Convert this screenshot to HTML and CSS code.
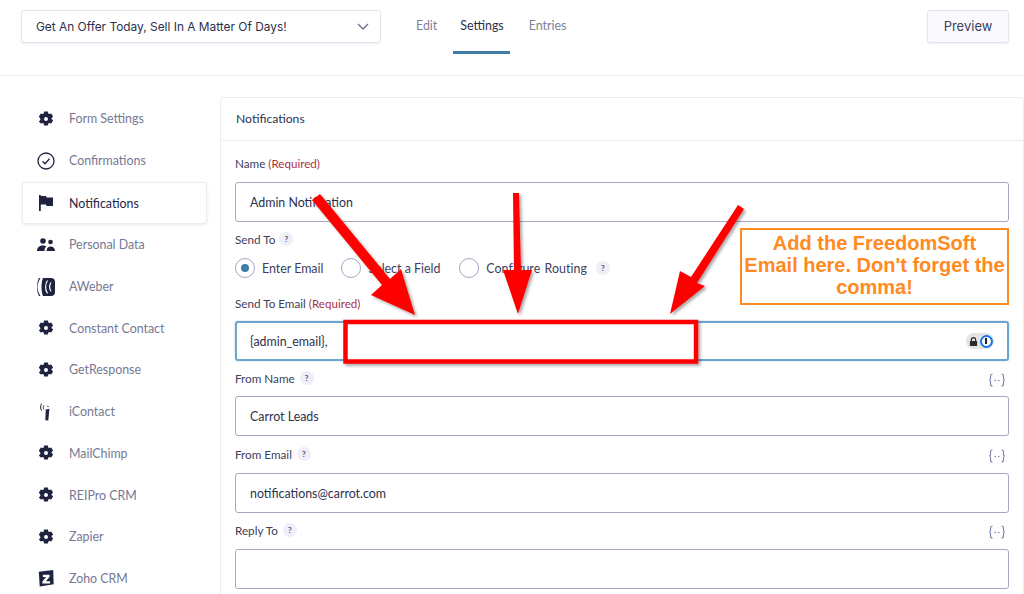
FILE: index.html
```html
<!DOCTYPE html>
<html lang="en">
<head>
<meta charset="utf-8">
<title>Notifications</title>
<link rel="stylesheet" href="styles.css">
</head>
<body>
<svg class="defs" width="0" height="0" aria-hidden="true">
  <symbol id="gear" viewBox="0 0 16 16"><path fill-rule="evenodd" d="M6.100.5h3.800l.4 2 1 .6 1.900-.7 1.900 3.200-1.500 1.300v1.200l1.500 1.300-1.900 3.200-1.900-.7-1 .6-.4 2H6.100l-.4-2-1-.6-1.900.7L.9 10.400l1.500-1.300V7.900L.9 5.600l1.900-3.200 1.900.7 1-.6zM8 6a2 2 0 1 0 0 4 2 2 0 0 0 0-4z"/></symbol>
  <symbol id="merge" viewBox="0 0 18 14"><path d="M4.500 1C2.800 1 2.500 1.800 2.500 3v2.500C2.500 6.500 2 7 1 7c1 0 1.500.5 1.500 1.500V11c0 1.200.3 2 2 2M13.500 1c1.700 0 2 .8 2 2v2.500c0 1 .5 1.500 1.500 1.500-1 0-1.500.5-1.500 1.500V11c0 1.200-.3 2-2 2" fill="none" stroke="currentColor" stroke-width="1.100"/><circle cx="7.300" cy="7.500" r=".8" fill="currentColor"/><circle cx="10.700" cy="7.500" r=".8" fill="currentColor"/></symbol>
</svg>

<header class="topbar">
  <div class="form-select"><span>Get An Offer Today, Sell In A Matter Of Days!</span>
    <svg class="chevron" viewBox="0 0 12 7"><path d="M1 1l5 5 5-5"/></svg>
  </div>
  <nav class="tabs">
    <a class="tab">Edit</a>
    <a class="tab tab-active">Settings</a>
    <a class="tab tab-last">Entries</a>
  </nav>
  <button class="preview">Preview</button>
</header>

<main class="layout">
  <aside class="sidebar">
    <a class="side-item"><span class="ico"><svg class="gear"><use href="#gear"/></svg></span>Form Settings</a>
    <a class="side-item"><span class="ico"><svg class="ico-lg" viewBox="0 0 18 18"><circle cx="9" cy="9" r="8" class="ln"/><path d="M5.500 9.300l2.500 2.400 4.500-5" class="ln"/></svg></span>Confirmations</a>
    <a class="side-item side-active"><span class="ico"><svg class="ico-lg" viewBox="0 0 18 18"><path d="M2 1h1.800v1H9l.6 1.500H16v8.500H9.500L9 10.500H3.800V17H2z"/></svg></span>Notifications</a>
    <a class="side-item"><span class="ico"><svg class="ico-people" viewBox="0 0 20 14"><circle cx="7" cy="3" r="2.800"/><circle cx="14.500" cy="4" r="2.300"/><path d="M1 13c0-3.500 2.500-5.500 6-5.500 1.500 0 2.500.3 3.300 1-1.200 1-1.800 2.500-1.800 4.500zM10.500 13c0-2.800 1.800-4.500 4.200-4.500S19 10.200 19 13z"/></svg></span>Personal Data</a>
    <a class="side-item"><span class="ico"><svg class="ico-lg" viewBox="0 0 18 18"><path d="M6 0h8c2.500 0 4 1.500 4 4v10c0 2.500-1.500 4-4 4H6C4 14 4 4 6 0z"/><path d="M3.500 0C1 4 .5 7 .5 9s.5 5 3 9H2C.5 15 0 12 0 9s.5-6 2-9z"/><path d="M10.500 2.500c-2.500 3.500-2.500 9.500 0 13M14 4.500c-1.500 2.500-1.500 6.500 0 9" class="ln-w"/></svg></span>AWeber</a>
    <a class="side-item"><span class="ico"><svg class="gear"><use href="#gear"/></svg></span>Constant Contact</a>
    <a class="side-item"><span class="ico"><svg class="gear"><use href="#gear"/></svg></span>GetResponse</a>
    <a class="side-item"><span class="ico"><svg class="ico-lg" viewBox="0 0 18 18"><path d="M8.800 6.500l3.600-.8-1.100 11.800-3-.2z"/><path d="M7 6.500c-1-1.200-1-2.800 0-4.200M4.800 7.800C3 5.500 3.300 2.500 4.800.5M10 3.800c.5-.6 1.200-.6 1.800 0" class="ln-thin"/></svg></span>iContact</a>
    <a class="side-item"><span class="ico"><svg class="gear"><use href="#gear"/></svg></span>MailChimp</a>
    <a class="side-item"><span class="ico"><svg class="gear"><use href="#gear"/></svg></span>REIPro CRM</a>
    <a class="side-item"><span class="ico"><svg class="gear"><use href="#gear"/></svg></span>Zapier</a>
    <a class="side-item"><span class="ico"><svg class="ico-lg" viewBox="0 0 18 20"><path d="M1 3l16-2 .5 16L2 19.500z"/><path d="M5.500 6.500h7.500v2l-4 5h4.500v2.500H5v-2l4-5H5.500z" class="fill-w"/></svg></span>Zoho CRM</a>
  </aside>

  <section class="card">
    <h2 class="card-head">Notifications</h2>
    <div class="card-body">
      <div class="label-row l-name"><label>Name</label> <span class="req">(Required)</span></div>
      <div class="input">Admin Notification</div>

      <div class="label-row l-send">Send To <span class="help">?</span></div>
      <div class="radios">
        <span class="radio-wrap"><span class="radio radio-on"></span>Enter Email</span>
        <span class="radio-wrap"><span class="radio"></span>Select a Field</span>
        <span class="radio-wrap radio-last"><span class="radio"></span>Configure Routing <span class="help">?</span></span>
      </div>

      <div class="label-row l-email">Send To Email <span class="req">(Required)</span></div>
      <div class="input input-focus">{admin_email},
        <span class="pw-badge">
          <svg class="pw-lock" viewBox="0 0 10 11"><path fill-rule="evenodd" d="M2 5V3.500a3 3 0 0 1 6 0V5h1v5.500H1V5zm1.300 0h3.400V3.500a1.700 1.700 0 0 0-3.400 0z"/></svg>
          <span class="pw-one"></span>
        </span>
      </div>

      <div class="label-row l-spread l-fname"><span class="lbl">From Name <span class="help">?</span></span><svg class="merge"><use href="#merge"/></svg></div>
      <div class="input">Carrot Leads</div>

      <div class="label-row l-spread l-femail"><span class="lbl">From Email <span class="help">?</span></span><svg class="merge"><use href="#merge"/></svg></div>
      <div class="input">notifications@carrot.com</div>

      <div class="label-row l-spread l-reply"><span class="lbl">Reply To <span class="help">?</span></span><svg class="merge"><use href="#merge"/></svg></div>
      <div class="input"></div>
    </div>
  </section>
</main>

<svg class="annot-arrows" viewBox="0 0 1024 594" aria-hidden="true">
  <defs>
    <filter id="sh" x="-20%" y="-20%" width="140%" height="140%"><feDropShadow dx="2" dy="2" stdDeviation="1.500" flood-color="#000" flood-opacity=".35"/></filter>
  </defs>
  <g class="arrow" filter="url(#sh)">
    <path d="M312 200L320 194L390 279L401 269L415 315L371 295L382 285Z"/>
    <path d="M513 193h6l2 77h11l-14 44-15-44h11z"/>
    <path d="M738 205L744 209L697 283L705 286L670 314L680 271L691 277Z"/>
  </g>
  <rect class="red-box" x="345.500" y="322" width="350.500" height="39.500" filter="url(#sh)"/>
</svg>
<div class="callout">Add the FreedomSoft<br>Email here. Don't forget the<br>comma!</div>
</body>
</html>
```
FILE: styles.css
```css
* { box-sizing: border-box; }
html, body { margin: 0; height: 594px; overflow: hidden; background: #fff; }
body { font-family: Lato, "Open Sans", sans-serif; color: #242748; font-size: 12.400px; position: relative; }
.defs { position: absolute; }

.topbar { height: 76px; border-bottom: 1px solid #ecedf4; display: flex; align-items: flex-start; padding: 10px 15px 0 21px; font-family: Inter, sans-serif; }
.form-select { width: 360px; height: 33px; border: 1px solid #e2e3ef; border-radius: 3px; box-shadow: 0 1px 2px rgba(40,45,100,.08); display: flex; align-items: center; justify-content: space-between; padding: 0 11px 1px 14px; font-size: 11.900px; font-weight: 400; color: #2d304e; }
.chevron { width: 12px; height: 7px; fill: none; stroke: #6c7088; stroke-width: 1.300; }
.tabs { display: flex; gap: 23px; margin-left: 35px; height: 44px; font-family: Lato, sans-serif; }
.tab { font-size: 12.400px; color: #7e8298; padding: 6px 0 0; height: 44px; line-height: 20px; }
.tab-active { color: #2d304e; border-bottom: 3px solid #3e7ba5; padding-left: 7px; padding-right: 6px; margin: 0 -7px; }
.tab-last { margin-left: 3px; }
.preview { margin-left: auto; width: 82px; height: 33px; background: #fafafe; border: 1px solid #e2e3ef; border-radius: 3px; box-shadow: 0 1px 2px rgba(40,45,100,.08); font: 400 13px Inter, sans-serif; color: #3b3f5c; padding: 0 0 1px; }

.layout { display: flex; padding: 21px 0 0 22px; gap: 13px; }
.sidebar { width: 185px; flex: none; display: flex; flex-direction: column; padding-top: 1px; }
.side-item { height: 41.700px; flex: none; display: flex; align-items: center; font-size: 12.400px; color: #747894; border: 1px solid transparent; border-radius: 3px; padding: 0 0 0 14px; }
.ico { width: 32px; display: flex; flex: none; }
.side-active { color: #242748; background: #fff; border-color: #ebecf4; box-shadow: 0 1px 3px rgba(40,45,100,.1); margin-top: 1px; }
.gear { width: 16px; height: 16px; fill: #20233f; margin-left: 1px; }
.ico-lg { width: 18px; height: 18px; fill: #20233f; }
.ico-people { width: 20px; height: 14px; fill: #20233f; margin-left: -1px; }
.ln { fill: none; stroke: #20233f; stroke-width: 1.300; }
.ln-w { fill: none; stroke: #fff; stroke-width: 1.200; }
.ln-thin { fill: none; stroke: #20233f; stroke-width: 1; }
.fill-w { fill: #fff; }

.card { flex: 1; height: 520px; border: 1px solid #ecedf4; border-radius: 3px 3px 0 0; }
.card-head { margin: 0; height: 43px; font-size: 12.200px; font-weight: 400; color: #2d304e; line-height: 41px; padding-left: 15px; border-bottom: 1px solid #ecedf4; }
.card-body { padding: 0 14px; }
.label-row { font-size: 11.700px; color: #3d405c; display: flex; align-items: center; gap: 3px; height: 18px; }
.lbl { display: inline-flex; align-items: center; gap: 4px; }
.l-name { margin-top: 13px; margin-bottom: 10px; }
.l-send { margin-top: 8px; }
.l-email { margin-top: 15px; margin-bottom: 9px; }
.l-spread { justify-content: space-between; }
.l-fname { margin-top: 8px; margin-bottom: 9px; }
.l-femail { margin-top: 9px; margin-bottom: 10px; }
.l-reply { margin-top: 8px; margin-bottom: 10px; }
.req { color: #a7323f; font-size: 11.600px; }
.help { display: inline-flex; width: 14px; height: 14px; border-radius: 50%; background: #eeeff8; color: #50546e; font-size: 8px; font-weight: 700; align-items: center; justify-content: center; margin-left: 1px; }
.merge { width: 18px; height: 14px; color: #7a80ad; margin: 3px 3px 0 0; }
.input { height: 40px; border: 1px solid #a5a8c4; border-radius: 3px; padding: 0 14px; font-size: 12.400px; color: #2d304e; display: flex; align-items: center; justify-content: space-between; }
.input-focus { border: 2px solid #6ba6cf; padding: 0 13px; box-shadow: 0 0 2px rgba(62,123,165,.4); }
.radios { display: flex; align-items: center; gap: 18px; margin-top: 9px; height: 22px; font-size: 12.400px; color: #3d405c; }
.radio-wrap { display: inline-flex; align-items: center; gap: 7px; }
.radio-last { margin-left: 1px; word-spacing: 1px; letter-spacing: .05px; }
.radio-last .help { margin-left: 2px; }
.radio { width: 20px; height: 20px; border-radius: 50%; border: 1px solid #a5a8c4; background: #fff; display: inline-block; position: relative; flex: none; }
.radio-on::after { content: ""; position: absolute; left: 5px; top: 5px; width: 8px; height: 8px; border-radius: 50%; background: #3e7ba5; }
.pw-badge { display: inline-flex; align-items: center; justify-content: flex-end; gap: 2px; width: 28px; height: 16px; border-radius: 8px; background: #e4e4e4; padding: 0 1px 0 3px; }
.pw-lock { width: 10px; height: 11px; fill: #2a2a2a; }
.pw-one { width: 13px; height: 13px; border-radius: 50%; background: #fff; border: 2px solid #1a73e8; position: relative; flex: none; }
.pw-one::after { content: ""; position: absolute; left: 3px; top: 1.500px; width: 2px; height: 6px; background: #222; }

.annot-arrows { position: absolute; left: 0; top: 0; width: 1024px; height: 594px; pointer-events: none; }
.arrow { fill: #fe0000; }
.red-box { fill: #fff; stroke: #fe0000; stroke-width: 4.500; }
.callout { position: absolute; left: 740px; top: 228px; width: 269px; height: 77px; background: #fff; border: 2px solid #ff8a1f; color: #ff8a1f; font: 700 20px/22px "Liberation Sans", Arial, sans-serif; text-align: center; padding: 2px 0 0; white-space: nowrap; }
```
